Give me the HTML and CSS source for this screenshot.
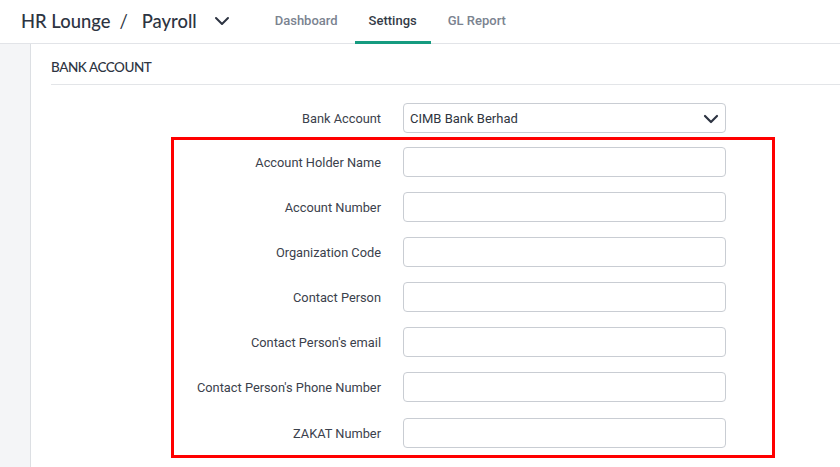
FILE: index.html
```html
<!DOCTYPE html>
<html>
<head>
<meta charset="utf-8">
<link rel="stylesheet" href="styles.css">
</head>
<body>
<header class="topbar">
  <div class="brand">
    <span class="brand-name">HR Lounge</span>
    <span class="brand-sep">/</span>
    <span class="brand-app">Payroll</span>
    <svg class="brand-chev" width="16" height="10" viewBox="0 0 16 10"><path d="M2 2 L8 8 L14 2" fill="none" stroke="#2d3442" stroke-width="2" stroke-linecap="round" stroke-linejoin="round"/></svg>
  </div>
  <nav class="tabs">
    <a class="tab">Dashboard</a>
    <a class="tab active">Settings</a>
    <a class="tab">GL Report</a>
  </nav>
</header>
<div class="layout">
  <aside class="sidebar"></aside>
  <main class="content">
    <h2 class="section-title">BANK ACCOUNT</h2>
    <div class="form">
      <div class="row row-outer">
        <label class="label">Bank Account</label>
        <div class="select">
          <span>CIMB Bank Berhad</span>
          <svg width="16" height="10" viewBox="0 0 16 10"><path d="M2 2 L8 8 L14 2" fill="none" stroke="#2d3442" stroke-width="2.2" stroke-linecap="round" stroke-linejoin="round"/></svg>
        </div>
      </div>
      <div class="highlight">
        <div class="row"><label class="label">Account Holder Name</label><input class="input" type="text"></div>
        <div class="row"><label class="label">Account Number</label><input class="input" type="text"></div>
        <div class="row"><label class="label">Organization Code</label><input class="input" type="text"></div>
        <div class="row"><label class="label">Contact Person</label><input class="input" type="text"></div>
        <div class="row"><label class="label">Contact Person's email</label><input class="input" type="text"></div>
        <div class="row row-pre"><label class="label">Contact Person's Phone Number</label><input class="input" type="text"></div>
        <div class="row row-last"><label class="label">ZAKAT Number</label><input class="input" type="text"></div>
      </div>
    </div>
  </main>
</div>
</body>
</html>
```
FILE: styles.css
```css
* { box-sizing: border-box; }
html, body { margin: 0; padding: 0; background: #fff; }
body { font-family: Roboto, "Liberation Sans", sans-serif; color: #3b414c; width: 840px; height: 467px; overflow: hidden; }

.topbar {
  height: 44px;
  border-bottom: 1px solid #e2e4e8;
  display: flex;
  align-items: stretch;
  padding-left: 21px;
}
.brand {
  display: flex;
  align-items: center;
  font-family: Lato, "Liberation Sans", sans-serif;
  color: #2d3442;
  padding-bottom: 2px;
}
.brand-name { font-size: 18.4px; font-weight: 500; }
.brand-sep { font-size: 18.4px; margin-left: 9px; margin-right: 14px; }
.brand-app { font-size: 18.4px; font-weight: 500; }
.brand-chev { margin-left: 17px; }

.tabs { display: flex; margin-left: 31px; gap: 3px; }
.tab {
  display: flex;
  align-items: center;
  padding: 0 14px;
  font-size: 13px;
  font-weight: 500;
  color: #7b8390;
  border-bottom: 3px solid transparent;
  margin-bottom: -1px;
}
.tab.active { color: #343b47; border-bottom-color: #169b80; }

.layout { display: flex; height: 423px; }
.sidebar { width: 31px; background: #f4f5f7; border-right: 1px solid #dcdfe3; flex: none; }
.content { flex: 1; padding-left: 20px; }

.section-title {
  margin: 0;
  font-family: Lato, "Liberation Sans", sans-serif;
  font-size: 13.5px;
  font-weight: 500;
  color: #2d3442;
  padding-top: 6px;
  line-height: 34px;
  border-bottom: 1px solid #e3e5e8;
  letter-spacing: -0.45px;
}

.form { margin-left: 120px; margin-top: 18px; width: 604px; }
.row { display: flex; align-items: center; height: 30px; margin-bottom: 15px; }
.row-outer { padding-left: 3px; margin-bottom: 4px; }
.row-pre { margin-bottom: 0; }
.row-last { margin-bottom: 0; margin-top: 16px; }
.label {
  width: 207px;
  text-align: right;
  font-size: 12.8px;
  color: #3b414c;
  margin-right: 22px;
  flex: none;
}
.input, .select {
  width: 323px;
  height: 30px;
  border: 1px solid #c9cdd3;
  border-radius: 4px;
  background: #fff;
  flex: none;
  margin: 0;
}
.select {
  display: flex;
  align-items: center;
  justify-content: space-between;
  padding: 0 6px;
  font-size: 13px;
  color: #2f3540;
}
.select svg { margin-top: 1px; }

.highlight {
  border: 3px solid #ff0000;
  padding: 7px 0 7px 0;
  width: 604px;
}
```
